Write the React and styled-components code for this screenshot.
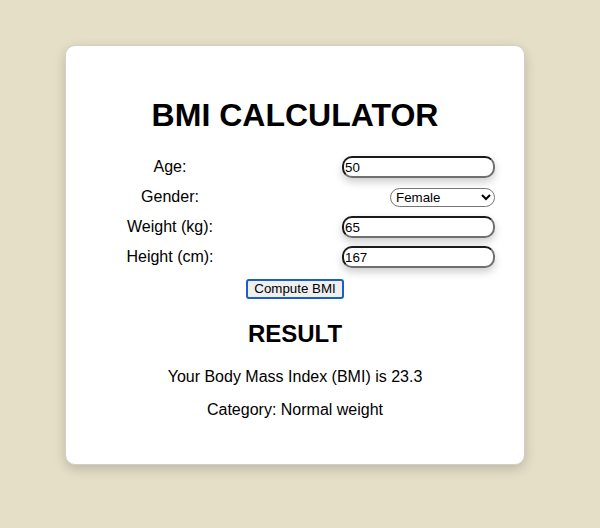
import React, { useState } from "react";
import styled, { createGlobalStyle } from "styled-components";

const Global = createGlobalStyle`
  html, body {
    margin: 0;
    padding: 0;
    background: #e5dfc7;
    font-family: "Liberation Sans", Arial, sans-serif;
  }
`;

const Page = styled.div`
  padding: 45px 0 0 65px;
  min-height: 528px;
  box-sizing: border-box;
`;

const Card = styled.div`
  box-sizing: border-box;
  width: 460px;
  height: 420px;
  background: #fff;
  border: 1px solid #d2cfc4;
  border-radius: 10px;
  box-shadow: 0 4px 12px rgba(0, 0, 0, 0.18);
  padding: 0 29px;
  display: flex;
  flex-direction: column;
  align-items: stretch;
  color: #000;
`;

const Title = styled.h1`
  margin: 51px 0 22px;
  font-size: 32px;
  line-height: 37px;
  font-weight: bold;
  text-align: center;
`;

const Form = styled.div`
  display: flex;
  flex-direction: column;
  gap: 8px;
`;

const Row = styled.div`
  display: flex;
  align-items: center;
  justify-content: space-between;
  height: 22px;
`;

const Label = styled.label`
  width: 150px;
  text-align: center;
  font-size: 16px;
  line-height: 18px;
`;

const Input = styled.input`
  box-sizing: border-box;
  width: 153px;
  height: 22px;
  padding: 0 1px;
  border: 2px solid;
  border-color: #1a1a1a #6f6f6f #6f6f6f #1a1a1a;
  border-radius: 10px;
  box-shadow: 0 4px 8px rgba(0, 0, 0, 0.2);
  font-family: "Liberation Sans", Arial, sans-serif;
  font-size: 13.33px;
  color: #000;
  background: #fff;
  outline: none;
`;

const Select = styled.select`
  box-sizing: border-box;
  width: 105px;
  height: 19px;
  border: 1px solid #767676;
  border-radius: 10px;
  font-family: "Liberation Sans", Arial, sans-serif;
  font-size: 13.33px;
  color: #000;
  background: #fff;
  padding: 0 1px;
`;

const ButtonWrap = styled.div`
  display: flex;
  justify-content: center;
  margin-top: 11px;
`;

const Button = styled.button`
  box-sizing: border-box;
  height: 20px;
  padding: 0 6px;
  background: #efefef;
  border: 2px solid #1b5fc6;
  border-radius: 3px;
  font-family: "Liberation Sans", Arial, sans-serif;
  font-size: 13.33px;
  color: #000;
  line-height: 14px;
  cursor: pointer;
`;

const ResultTitle = styled.h2`
  margin: 21px 0 20px;
  font-size: 24px;
  line-height: 28px;
  font-weight: bold;
  text-align: center;
`;

const Text = styled.p`
  margin: 0 0 15px;
  font-size: 16px;
  line-height: 18px;
  text-align: center;
`;

export default function App() {
  const [age, setAge] = useState("50");
  const [gender, setGender] = useState("female");
  const [weight, setWeight] = useState("65");
  const [height, setHeight] = useState("167");

  return (
    <>
      <Global />
      <Page>
        <Card>
          <Title>BMI CALCULATOR</Title>
          <Form>
            <Row>
              <Label>Age:</Label>
              <Input value={age} onChange={(e) => setAge(e.target.value)} />
            </Row>
            <Row>
              <Label>Gender:</Label>
              <Select value={gender} onChange={(e) => setGender(e.target.value)}>
                <option value="female">Female</option>
                <option value="male">Male</option>
              </Select>
            </Row>
            <Row>
              <Label>Weight (kg):</Label>
              <Input value={weight} onChange={(e) => setWeight(e.target.value)} />
            </Row>
            <Row>
              <Label>Height (cm):</Label>
              <Input value={height} onChange={(e) => setHeight(e.target.value)} />
            </Row>
          </Form>
          <ButtonWrap>
            <Button>Compute BMI</Button>
          </ButtonWrap>
          <ResultTitle>RESULT</ResultTitle>
          <Text>Your Body Mass Index (BMI) is 23.3</Text>
          <Text>Category: Normal weight</Text>
        </Card>
      </Page>
    </>
  );
}
